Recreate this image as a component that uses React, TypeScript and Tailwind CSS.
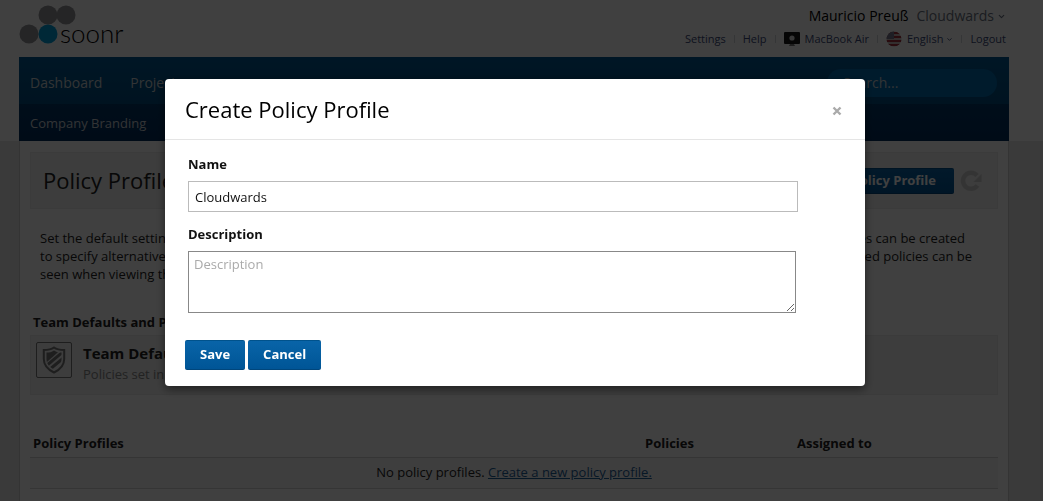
import { ChevronDown } from 'lucide-react';
import { useState } from 'react';
import type { ReactNode } from 'react';

function Logo() {
  return (
    <a href="#" className="flex">
      <svg width="57" height="40" viewBox="0 0 57 40" aria-hidden="true">
        <circle cx="29" cy="10" r="9.5" fill="#949499" />
        <circle cx="47" cy="10" r="9.5" fill="#949499" />
        <circle cx="10" cy="29" r="9.5" fill="#949499" />
        <circle cx="29" cy="29" r="9.5" fill="#00a0dc" />
      </svg>
      <span className="-ml-4 pt-3 font-[Lato] text-[26px] leading-8 font-light text-black">soonr</span>
    </a>
  );
}

function FlagIcon() {
  return (
    <svg width="16" height="16" viewBox="0 0 16 16" aria-hidden="true">
      <clipPath id="flag">
        <circle cx="8" cy="8" r="7.5" />
      </clipPath>
      <g clipPath="url(#flag)">
        <rect width="16" height="16" fill="#c9bcbc" />
        <path d="M0 2h16M0 6h16M0 10h16M0 14h16" stroke="#a5323e" strokeWidth="2" />
        <rect width="8" height="8" fill="#77778f" />
      </g>
    </svg>
  );
}

function ComputerIcon() {
  return (
    <svg width="16" height="16" viewBox="0 0 16 16" aria-hidden="true">
      <rect y="1" width="16" height="12" rx="1" fill="#1a1a1a" />
      <circle cx="8" cy="7" r="2.6" fill="#ddd" />
      <path d="M6 13h4l1 2H5z" fill="#777" />
    </svg>
  );
}

function ShieldIcon() {
  return (
    <svg width="24" height="28" viewBox="0 0 24 28" fill="none" aria-hidden="true">
      <clipPath id="shield">
        <path d="M12 4.5C9.5 6.3 7.5 6.5 4.5 6.5V13c0 5 3 8 7.5 10.5C16.5 21 19.5 18 19.5 13V6.5C16.5 6.5 14.5 6.3 12 4.5Z" />
      </clipPath>
      <path
        d="M12 1.5C9 3.6 6 4 1.8 4V13c0 6.5 4 10.500 10.2 13.5C18.2 23.5 22.2 19.5 22.2 13V4C18 4 15 3.6 12 1.5Z"
        stroke="#777"
        strokeWidth="2"
      />
      <g clipPath="url(#shield)" stroke="#777">
        <path d="M0 15 17 0" strokeWidth="8" />
        <path d="M4 20 22 5" strokeWidth="3" />
        <path d="M7 24 24 10" strokeWidth="3" />
      </g>
    </svg>
  );
}

function RefreshIcon() {
  return (
    <svg width="22" height="22" viewBox="0 0 22 22" fill="none" aria-hidden="true">
      <path d="M17.5 15.5A8 8 0 1 1 17 5.500" stroke="#d0d0d0" strokeWidth="4.5" />
      <path d="M21.5 4v8h-8z" fill="#d0d0d0" />
    </svg>
  );
}

function Separator() {
  return <span className="h-2 w-px bg-gray-300" />;
}

function Button({
  children,
  type = 'button',
  className = 'h-[30px] px-[15px]',
  onClick,
}: {
  children: ReactNode;
  type?: 'button' | 'submit';
  className?: string;
  onClick?: () => void;
}) {
  return (
    <button
      type={type}
      onClick={onClick}
      className={`rounded-xs border-y border-t-[#00528c] border-b-[#00467c] bg-linear-to-b from-[#0964a8] to-[#005596] text-[13px] font-bold text-white ${className}`}
    >
      {children}
    </button>
  );
}

function Header() {
  return (
    <header className="flex h-[57px] justify-between">
      <div className="pt-[5px]">
        <Logo />
      </div>
      <div className="flex flex-col items-end pt-[6px] pr-[3px]">
        <div className="flex items-center gap-2 text-sm leading-5">
          <span className="text-black">Mauricio Preuß</span>
          <a href="#" className="flex items-center gap-[3px] text-gray-500">
            Cloudwards
            <ChevronDown size={9} strokeWidth={3} />
          </a>
        </div>
        <div className="mt-1 flex items-center gap-2 text-[11px] leading-[18px] text-[#3c4a78]">
          <a href="#">Settings</a>
          <Separator />
          <a href="#">Help</a>
          <Separator />
          <a href="#" className="flex items-center gap-[5px]">
            <ComputerIcon />
            MacBook Air
          </a>
          <Separator />
          <a href="#" className="flex items-center gap-[5px]">
            <FlagIcon />
            <span className="flex items-center gap-[3px]">
              English
              <ChevronDown size={7} strokeWidth={3} />
            </span>
          </a>
          <Separator />
          <a href="#">Logout</a>
        </div>
      </div>
    </header>
  );
}

function Navigation() {
  return (
    <nav className="text-[#c8cdd2]">
      <div className="flex h-[47px] items-center justify-between bg-linear-to-b from-[#005a94] to-[#004c80] pr-3 pl-[11px] text-sm">
        <div className="flex items-center gap-7 pt-1">
          <a href="#">Dashboard</a>
          <a href="#">Projects</a>
        </div>
        <input
          type="search"
          aria-label="Search"
          placeholder="Search..."
          className="mt-1 h-7 w-[170px] rounded-full bg-[#006cb0] pl-4 placeholder:text-[#c8cdd2]"
        />
      </div>
      <div className="flex h-[37px] items-center bg-linear-to-b from-[#003868] to-[#002c5c] pt-[2px] pl-[11px] text-[13px]">
        <a href="#">Company Branding</a>
      </div>
    </nav>
  );
}

function PoliciesPage() {
  return (
    <main className="border-x border-[#cfcfcf] bg-white px-[10px] pt-[11px] pb-[13px] text-[13px] text-[#222]">
      <div className="flex h-[57px] items-center justify-between border border-[#e9e9e9] bg-[#f1f1f1] pr-[15px] pl-3">
        <h1 className="pb-px text-[22px]">Policy Profiles</h1>
        <div className="flex items-center gap-[6px]">
          <Button className="h-[26px] px-[18px]">Create Policy Profile</Button>
          <button type="button" aria-label="Refresh">
            <RefreshIcon />
          </button>
        </div>
      </div>

      <div className="mt-5 pr-[26px] pl-[10px] leading-[18px]">
        <p className="flex justify-between">
          <span>Set the default settings</span>
          <span className="pr-[7px]">profiles can be created</span>
        </p>
        <p className="flex justify-between">
          <span>to specify alternatives</span>
          <span>assigned policies can be</span>
        </p>
        <p>seen when viewing them.</p>
      </div>

      <h2 className="mt-[29px] pl-[3px] leading-[20px] font-bold">Team Defaults and Policies</h2>
      <div className="mt-[3px] flex h-[60px] gap-[11px] border border-[#e9e9e9] bg-[#f1f1f1] pt-[6px] pl-[5px]">
        <div className="flex size-9 items-center justify-center rounded-xs border border-[#777]">
          <ShieldIcon />
        </div>
        <div>
          <h3 className="text-[15px] leading-[22px] font-bold">Team Defaults</h3>
          <p className="leading-[20px] text-[#888]">Policies set in</p>
        </div>
      </div>

      <table className="mt-[39px] w-full table-fixed text-left">
        <thead>
          <tr className="h-[23px] border-b border-[#d4d4d4] align-top leading-[18px]">
            <th className="pl-[3px]">Policy Profiles</th>
            <th className="w-[152px]">Policies</th>
            <th className="w-[201px]">Assigned to</th>
          </tr>
        </thead>
        <tbody>
          <tr className="h-[31px] border-b border-[#d4d4d4] bg-[#f7f7f7]">
            <td colSpan={3} className="text-center">
              No policy profiles.{' '}
              <a href="#" className="text-[#1f5f99] underline">
                Create a new policy profile.
              </a>
            </td>
          </tr>
        </tbody>
      </table>
    </main>
  );
}

function PolicyProfileDialog({ onClose }: { onClose: () => void }) {
  const [name, setName] = useState('Cloudwards');
  const [description, setDescription] = useState('');

  return (
    <div className="fixed inset-0 flex items-start justify-center bg-black/75 pt-[79px] pr-[13px]">
      <div
        role="dialog"
        aria-modal="true"
        aria-labelledby="dialog-title"
        className="w-full max-w-[700px] rounded bg-white text-[13px] text-[#111] shadow-[0_3px_10px_rgba(0,0,0,0.5)]"
      >
        <div className="flex h-[61px] items-center justify-between border-b border-[#e5e5e5] pr-[23px] pl-5">
          <h2 id="dialog-title" className="text-[22px] text-black">
            Create Policy Profile
          </h2>
          <button type="button" aria-label="Close" onClick={onClose} className="pt-1 text-[#aaa]">
            <svg width="10" height="10" viewBox="0 0 10 10" aria-hidden="true">
              <path d="M1.5 1.5l7 7M8.5 1.5l-7 7" stroke="currentColor" strokeWidth="2.4" />
            </svg>
          </button>
        </div>
        <form
          onSubmit={(e) => {
            e.preventDefault();
            onClose();
          }}
          className="px-5 pt-[15px] pb-4"
        >
          <div className="flex flex-col pr-[47px] pl-[3px]">
            <label htmlFor="name" className="leading-[18px] font-bold">
              Name
            </label>
            <input
              id="name"
              value={name}
              onChange={(e) => setName(e.target.value)}
              className="mt-2 h-[31px] border border-[#bbb] px-[6px] outline-none"
            />
            <label htmlFor="description" className="mt-[13px] leading-[18px] font-bold">
              Description
            </label>
            <textarea
              id="description"
              placeholder="Description"
              value={description}
              onChange={(e) => setDescription(e.target.value)}
              className="mt-2 mr-[2px] h-[62px] border border-[#888] px-[5px] py-[3px] leading-[18px] outline-none placeholder:text-[#aaa]"
            />
          </div>
          <div className="mt-[27px] flex gap-[3px]">
            <Button type="submit">Save</Button>
            <Button onClick={onClose}>Cancel</Button>
          </div>
        </form>
      </div>
    </div>
  );
}

export default function App() {
  const [open, setOpen] = useState(true);

  return (
    <div className="min-h-screen bg-[#e8e8e8] font-['Open_Sans',sans-serif]">
      <div className="bg-white pr-[34px] pl-[19px]">
        <Header />
      </div>
      <div className="bg-[linear-gradient(to_bottom,#fff_84px,#e8e8e8_84px)] pr-[34px] pl-[19px]">
        <Navigation />
        <PoliciesPage />
      </div>
      {open && <PolicyProfileDialog onClose={() => setOpen(false)} />}
    </div>
  );
}
